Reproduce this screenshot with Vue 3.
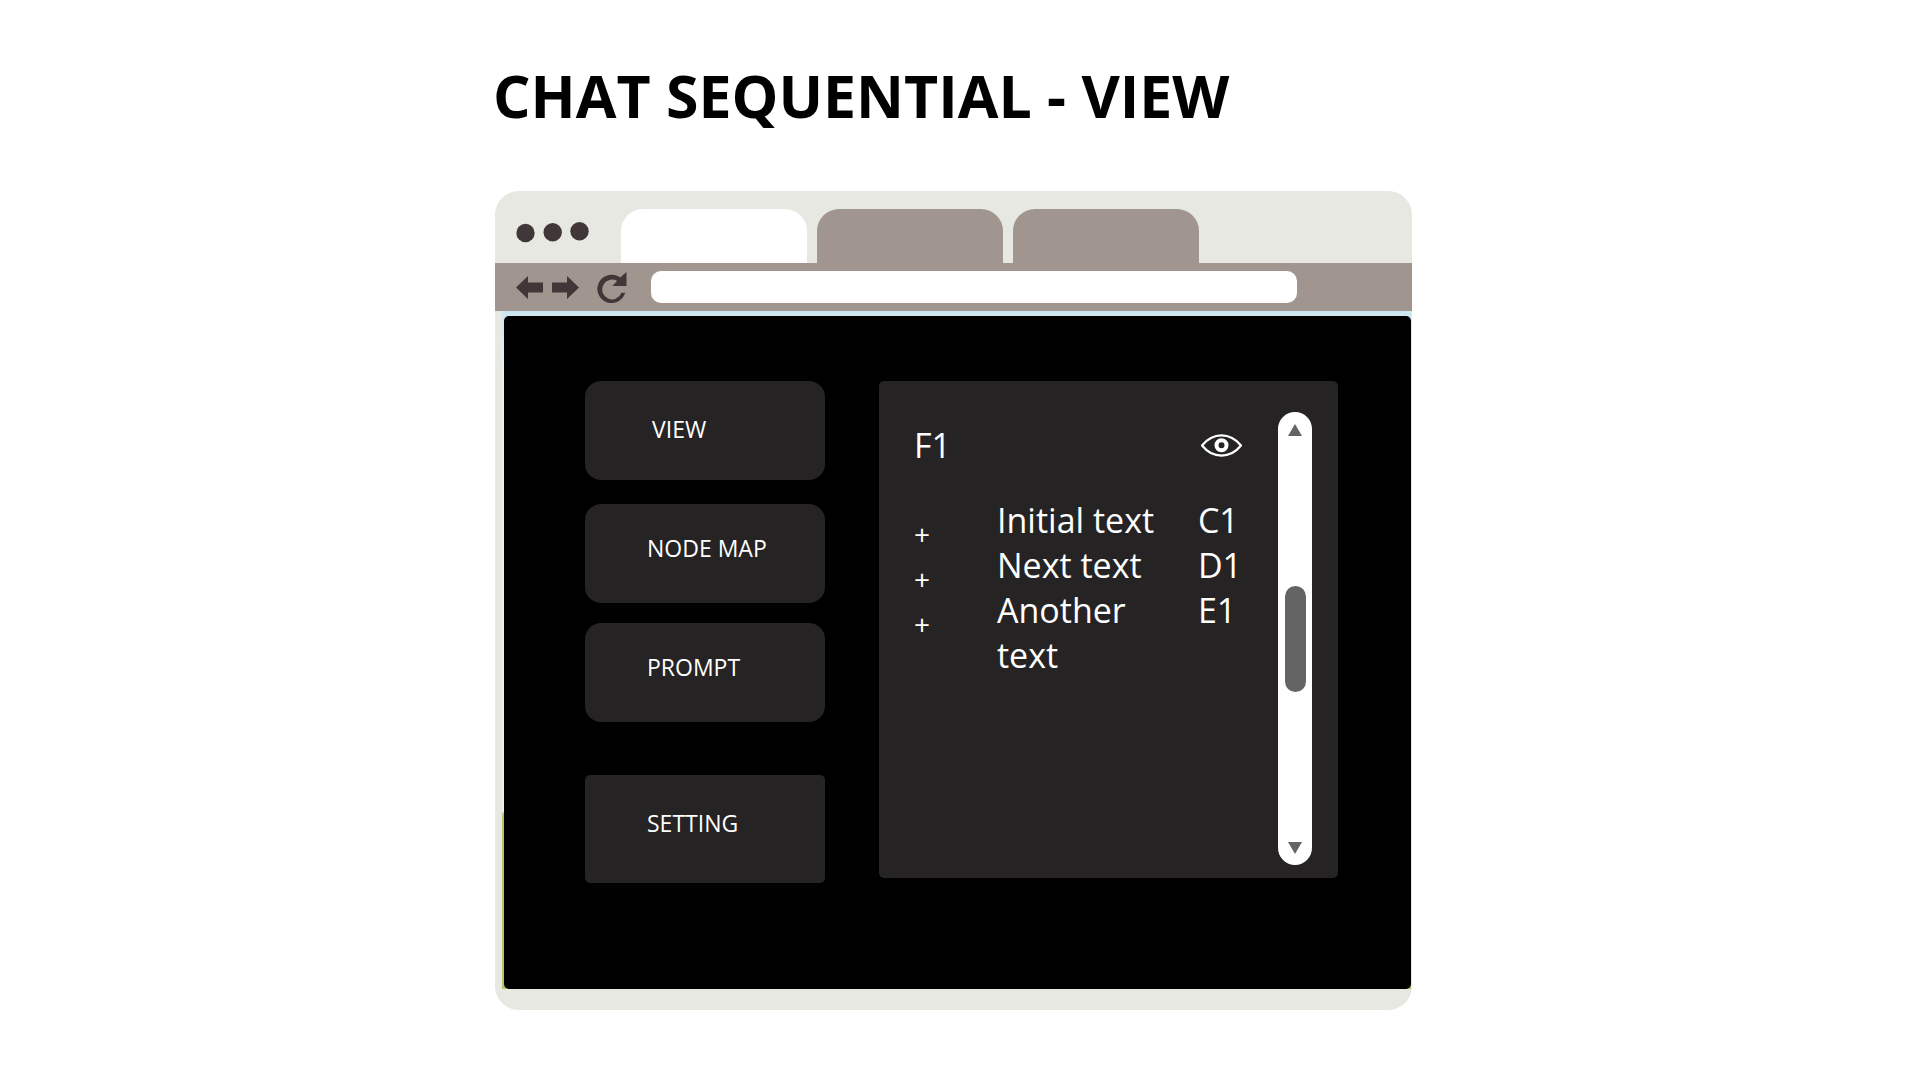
<script setup>
import { ref } from 'vue'

const address = ref('')
const menu = [
  { label: 'VIEW', kind: 'view' },
  { label: 'NODE MAP', kind: 'node' },
  { label: 'PROMPT', kind: 'prompt' },
  { label: 'SETTING', kind: 'setting' },
]
const rows = [
  { text: 'Initial text', code: 'C1' },
  { text: 'Next text', code: 'D1' },
  { text: 'Another text', code: 'E1' },
]
</script>

<template>
  <main class="page">
    <div class="stage">
      <h1>CHAT SEQUENTIAL - VIEW</h1>

      <section class="browser">
        <header class="tabbar">
          <svg class="dots" width="64" height="22" viewBox="0 0 64 22" aria-hidden="true">
            <circle cx="9.5" cy="12" r="9.2" />
            <circle cx="36.7" cy="11.3" r="9.2" />
            <circle cx="63.5" cy="10.3" r="9.2" />
          </svg>
          <button class="tab active" aria-label="Tab 1"></button>
          <button class="tab" aria-label="Tab 2"></button>
          <button class="tab" aria-label="Tab 3"></button>
        </header>

        <nav class="toolbar">
          <button class="tool" aria-label="Back">
            <svg width="27" height="23" viewBox="0 0 27 23"><path d="M0 11.5 12 0v6.5h15v10H12V23z" /></svg>
          </button>
          <button class="tool forward" aria-label="Forward">
            <svg width="27" height="23" viewBox="0 0 27 23"><path d="M27 11.5 15 0v6.5H0v10h15V23z" /></svg>
          </button>
          <button class="tool reload" aria-label="Reload">
            <svg width="30" height="31" viewBox="0 0 30 31">
              <path d="M29.5 0v14H15.300l4.900-5A9.900 9.900 0 1 0 24.400 20.800h3.800A14.200 14.200 0 1 1 23.200 5.600z" />
            </svg>
          </button>
          <input v-model="address" class="address" type="text" aria-label="Address" />
        </nav>

        <div class="viewport">
          <div class="screen">
            <aside class="menu">
              <button v-for="item in menu" :key="item.kind" :class="['entry', item.kind]">{{ item.label }}</button>
            </aside>

            <section class="panel">
              <div class="content">
                <div class="head">
                  <h2>F1</h2>
                  <button class="eye" aria-label="Show">
                    <svg width="41" height="23" viewBox="0 0 41 23">
                      <path d="M1 11.500C12-2 29-2 40 11.500C29 25 12 25 1 11.500z" fill="none" stroke="#fff" stroke-width="2.200" stroke-linejoin="round" />
                      <circle cx="20.500" cy="11.300" r="5" fill="none" stroke="#fff" stroke-width="4" />
                    </svg>
                  </button>
                </div>
                <table>
                  <tbody>
                    <tr v-for="row in rows" :key="row.code">
                      <td class="add"><button :aria-label="'Add to ' + row.code">+</button></td>
                      <td class="text">{{ row.text }}</td>
                      <td class="code">{{ row.code }}</td>
                    </tr>
                  </tbody>
                </table>
              </div>
              <div class="scrollbar">
                <button aria-label="Scroll up">
                  <svg width="14" height="12" viewBox="0 0 14 12"><path d="M7 0l7 12H0z" /></svg>
                </button>
                <div class="thumb"></div>
                <button aria-label="Scroll down">
                  <svg width="14" height="12" viewBox="0 0 14 12"><path d="M0 0h14L7 12z" /></svg>
                </button>
              </div>
            </section>
          </div>
        </div>
      </section>
    </div>
  </main>
</template>

<style>
body {
  background: #fff;
}
</style>

<style scoped>
* {
  box-sizing: border-box;
}
.page {
  display: grid;
  grid-template-columns: 495fr 917fr 508fr;
  font-family: "Open Sans", "Noto Sans", sans-serif;
}
.stage {
  grid-column: 2;
  min-width: 0;
  padding: 55px 0 70px;
}
button {
  display: block;
  border: 0;
  padding: 0;
  background: none;
  font-family: inherit;
  cursor: pointer;
}
svg {
  display: block;
}
h1 {
  margin: 0 0 56px -2px;
  font-size: 59px;
  line-height: 80px;
  font-weight: 700;
  color: #000;
  white-space: nowrap;
}
.browser {
  border-radius: 24px;
  padding-bottom: 21px;
  background: #e6e8e1;
}
.tabbar {
  display: flex;
  align-items: flex-end;
  gap: 10px;
  height: 72px;
  padding-left: 21px;
}
.dots {
  overflow: visible;
  margin: 0 31px 20px 0;
  fill: #423738;
}
.tab {
  width: 186px;
  height: 54px;
  border-radius: 22px 22px 0 0;
  background: #a0968f;
}
.tab.active {
  background: #fff;
}
.toolbar {
  display: flex;
  align-items: center;
  height: 48px;
  padding: 0 115px 0 21px;
  background: #a0968f;
}
.tool {
  fill: #423738;
}
.forward {
  margin-left: 9px;
}
.reload {
  margin: 0 24px 0 18px;
}
.address {
  flex: 1;
  min-width: 0;
  height: 32px;
  border: 0;
  border-radius: 10px;
  padding: 0 12px;
  background: #fff;
  font: 16px "Open Sans", sans-serif;
}
.viewport {
  margin: 0 1px 0 7px;
  padding: 5px 0 0 2px;
  background: linear-gradient(#cde5f0 0, #e9f3f4 60px, #e9f3f4 500px, #b4c470 503px);
}
.screen {
  display: flex;
  align-items: flex-start;
  gap: 54px;
  padding: 65px 73px 106px 81px;
  border-radius: 5px;
  background: #000;
}
.menu {
  display: flex;
  flex-direction: column;
  width: 240px;
}
.entry {
  height: 99px;
  padding: 0 0 12px 62px;
  border-radius: 16px;
  background: #252323;
  color: #fff;
  font-size: 23px;
  line-height: 30px;
  text-align: left;
}
.view {
  padding: 0 0 4px 67px;
}
.node {
  margin-top: 24px;
}
.prompt {
  margin-top: 20px;
}
.setting {
  height: 108px;
  margin-top: 53px;
  border-radius: 5px;
}
.panel {
  display: flex;
  flex: 1;
  gap: 36px;
  min-width: 0;
  padding: 31px 26px 13px 35px;
  border-radius: 5px;
  background: #252323;
  color: #fff;
}
.content {
  flex: 1;
  min-width: 0;
  padding-top: 11px;
}
.head {
  display: flex;
  align-items: center;
  justify-content: space-between;
  margin-bottom: 30px;
}
h2 {
  margin: 0;
  font-size: 34px;
  line-height: 45px;
  font-weight: 400;
}
table {
  width: 100%;
  border-collapse: collapse;
  font-size: 34px;
  line-height: 45px;
}
td {
  padding: 0;
  vertical-align: top;
}
.add {
  width: 83px;
}
.add button {
  padding-top: 28px;
  color: #fff;
  font-size: 28px;
  line-height: 17px;
}
.text {
  padding-right: 30px;
}
.code {
  width: 43px;
}
.scrollbar {
  display: flex;
  flex-direction: column;
  align-items: center;
  justify-content: space-between;
  width: 34px;
  height: 453px;
  padding: 12px 0 11px;
  border-radius: 17px;
  background: #fff;
  fill: #646464;
}
.thumb {
  width: 21px;
  height: 106px;
  border-radius: 11px;
  background: #646464;
}
</style>
